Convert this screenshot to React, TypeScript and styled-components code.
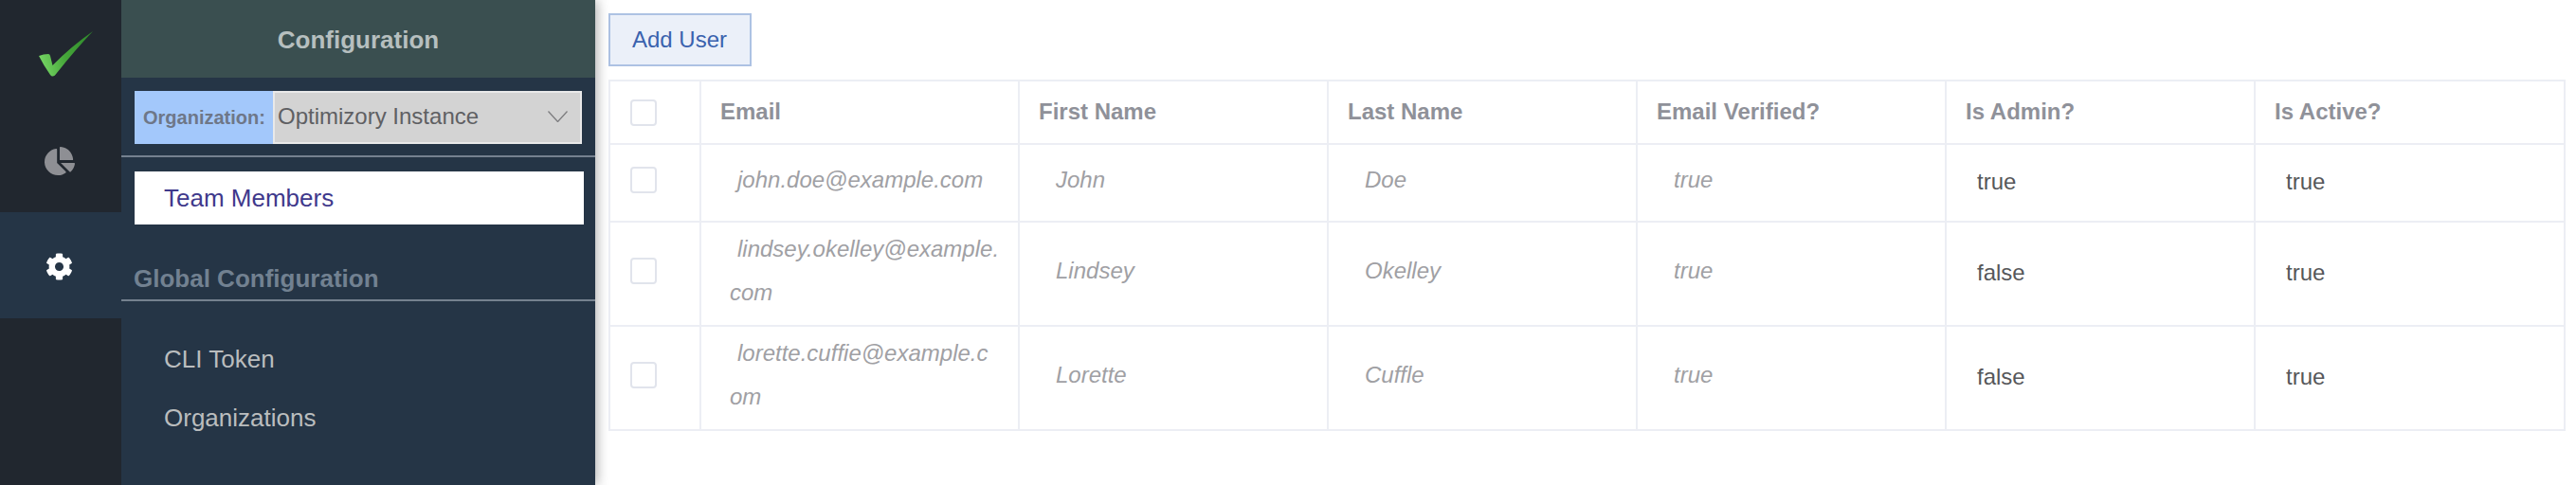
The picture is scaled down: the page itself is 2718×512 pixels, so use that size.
import styled, { createGlobalStyle } from "styled-components";
import { FaChartPie, FaCog } from "react-icons/fa";

const GlobalStyle = createGlobalStyle`
  html, body {
    margin: 0;
    padding: 0;
    height: 100%;
    overflow: hidden;
    background: #fff;
    font-family: "Liberation Sans", Arial, sans-serif;
  }
`;

const Page = styled.div`
  display: flex;
  height: 512px;
  width: 2718px;
`;

const Rail = styled.nav`
  width: 128px;
  flex: none;
  background: #21272f;
  position: relative;
  z-index: 2;
`;

const RailItem = styled.div<{ $active?: boolean }>`
  height: 112px;
  box-sizing: border-box;
  padding: 3px 3px 0 0;
  display: flex;
  align-items: center;
  justify-content: center;
  color: ${(props) => (props.$active ? "#fff" : "#8e8f94")};
  background: ${(props) => (props.$active ? "#253546" : "transparent")};
`;

const Sidebar = styled.aside`
  width: 500px;
  flex: none;
  background: #253546;
  box-shadow: 2px 0 12px rgba(0, 0, 0, 0.32);
  position: relative;
  z-index: 1;
`;

const SidebarHeader = styled.header`
  height: 82px;
  box-sizing: border-box;
  padding-top: 2px;
  display: flex;
  align-items: center;
  justify-content: center;
  background: #3a4f50;
  color: #b6bfbf;
  font-size: 26px;
  font-weight: 700;
`;

const OrgPicker = styled.div`
  display: flex;
  height: 56px;
  width: 472px;
  margin: 14px 0 0 14px;
`;

const OrgLabel = styled.label`
  width: 146px;
  flex: none;
  box-sizing: border-box;
  padding-left: 9px;
  display: flex;
  align-items: center;
  background: #a3c8fb;
  color: #6e7788;
  font-size: 20px;
  font-weight: 700;
`;

const OrgSelect = styled.div`
  flex: 1;
  display: flex;
  align-items: center;
  justify-content: space-between;
  padding: 0 13px 2px 3px;
  background: #d3d3d3;
  border: 2px solid #e9e9e9;
  color: #5f6063;
  font-size: 24px;
`;

const SectionRule = styled.div<{ $top: number }>`
  height: 2px;
  margin-top: ${(props) => props.$top}px;
  background: #75818f;
`;

const NavLink = styled.a<{ $selected?: boolean; $height: number }>`
  display: flex;
  align-items: center;
  height: ${(props) => props.$height}px;
  padding-left: 31px;
  font-size: 26px;
  color: ${(props) => (props.$selected ? "#3f398c" : "#babdbe")};
  background: ${(props) => (props.$selected ? "#fff" : "transparent")};
`;

const SelectedLink = styled(NavLink)`
  width: 474px;
  box-sizing: border-box;
  margin: 15px 0 0 14px;
`;

const SectionTitle = styled.h3`
  margin: 39px 0 0 13px;
  height: 36px;
  line-height: 36px;
  font-size: 26px;
  font-weight: 700;
  color: #728191;
`;

const NavGroup = styled.div`
  margin: 30px 0 0 14px;
`;

const Main = styled.main`
  flex: 1;
  min-width: 0;
  padding: 14px 1px 0 14px;
`;

const AddButton = styled.button`
  display: block;
  width: 151px;
  height: 56px;
  padding: 0 0 0 23px;
  text-align: left;
  background: #ebf0f9;
  border: 2px solid #adc2e3;
  color: #3a62ae;
  font-family: inherit;
  font-size: 24px;
`;

const Table = styled.table`
  width: 2063px;
  margin-top: 14px;
  table-layout: fixed;
  border-collapse: collapse;
  font-size: 24px;
  line-height: 46px;
`;

const Row = styled.tr<{ $height: number }>`
  height: ${(props) => props.$height}px;
`;

const Head = styled.th`
  padding: 0 0 2px 20px;
  border: 2px solid #eceef4;
  text-align: left;
  font-weight: 700;
  color: #8f9199;
`;

const CheckCell = styled.td<{ $head?: boolean }>`
  padding: 0 0 ${(props) => (props.$head ? 0 : 6)}px 21px;
  border: 2px solid #eceef4;
`;

const Check = styled.span`
  display: block;
  box-sizing: border-box;
  width: 28px;
  height: 28px;
  border: 2px solid #e1e4ec;
  border-radius: 4px;
  background: #fff;
`;

const ReadOnly = styled.td`
  padding: 0 10px 6px 30px;
  border: 2px solid #eceef4;
  font-style: italic;
  color: #a0a0a4;
`;

const FirstLine = styled.span`
  display: block;
  text-indent: 8px;
`;

const Plain = styled.td`
  padding: 0 0 2px 32px;
  border: 2px solid #eceef4;
  color: #56575a;
`;

const columns = [96, 336, 326, 326, 326, 326, 327];
const headings = ["Email", "First Name", "Last Name", "Email Verified?", "Is Admin?", "Is Active?"];

// email is split where the cell wraps it
const users = [
  { email: ["john.doe@example.com", ""], first: "John", last: "Doe", verified: "true", admin: "true", active: "true", height: 82 },
  { email: ["lindsey.okelley@example.", "com"], first: "Lindsey", last: "Okelley", verified: "true", admin: "false", active: "true", height: 110 },
  { email: ["lorette.cuffie@example.c", "om"], first: "Lorette", last: "Cuffle", verified: "true", admin: "false", active: "true", height: 110 },
];

function Logo() {
  return (
    <svg width="58" height="50" viewBox="0 0 58 50" style={{ margin: "1px 0 0 14px" }}>
      <defs>
        <linearGradient id="tick" x1="0" y1="0.5" x2="1" y2="0.3">
          <stop offset="0" stopColor="#74d463" />
          <stop offset="0.45" stopColor="#46a63a" />
          <stop offset="1" stopColor="#2f8a2c" />
        </linearGradient>
      </defs>
      <path d="M0 26 Q5 24 10 24 Q11.5 24 12 26 L14.5 36 Q34 16 57 0 Q38 20 19 44 Q15 50 12 46 Q5 36 0 26 Z" fill="url(#tick)" />
    </svg>
  );
}

function Chevron() {
  return (
    <svg width="21" height="12" viewBox="0 0 21 12" fill="none" stroke="#7d7d7f" strokeWidth="1.3">
      <path d="M0.5 0.5 L10.5 11.5 L20.5 0.5" />
    </svg>
  );
}

function App() {
  return (
    <Page>
      <GlobalStyle />
      <Rail>
        <RailItem><Logo /></RailItem>
        <RailItem><FaChartPie size={32} /></RailItem>
        <RailItem $active><FaCog size={29} /></RailItem>
      </Rail>
      <Sidebar>
        <SidebarHeader>Configuration</SidebarHeader>
        <OrgPicker>
          <OrgLabel>Organization:</OrgLabel>
          <OrgSelect>
            Optimizory Instance
            <Chevron />
          </OrgSelect>
        </OrgPicker>
        <SectionRule $top={12} />
        <SelectedLink $selected $height={56}>Team Members</SelectedLink>
        <SectionTitle>Global Configuration</SectionTitle>
        <SectionRule $top={4} />
        <NavGroup>
          <NavLink $height={62}>CLI Token</NavLink>
          <NavLink $height={62}>Organizations</NavLink>
        </NavGroup>
      </Sidebar>
      <Main>
        <AddButton>Add User</AddButton>
        <Table>
          <colgroup>
            {columns.map((width, i) => (
              <col key={i} width={width} />
            ))}
          </colgroup>
          <thead>
            <Row $height={67}>
              <CheckCell as="th" $head><Check /></CheckCell>
              {headings.map((heading) => (
                <Head key={heading}>{heading}</Head>
              ))}
            </Row>
          </thead>
          <tbody>
            {users.map((user) => (
              <Row key={user.email[0]} $height={user.height}>
                <CheckCell><Check /></CheckCell>
                <ReadOnly>
                  <FirstLine>{user.email[0]}</FirstLine>
                  {user.email[1]}
                </ReadOnly>
                <ReadOnly><FirstLine>{user.first}</FirstLine></ReadOnly>
                <ReadOnly><FirstLine>{user.last}</FirstLine></ReadOnly>
                <ReadOnly><FirstLine>{user.verified}</FirstLine></ReadOnly>
                <Plain>{user.admin}</Plain>
                <Plain>{user.active}</Plain>
              </Row>
            ))}
          </tbody>
        </Table>
      </Main>
    </Page>
  );
}

export default App;
